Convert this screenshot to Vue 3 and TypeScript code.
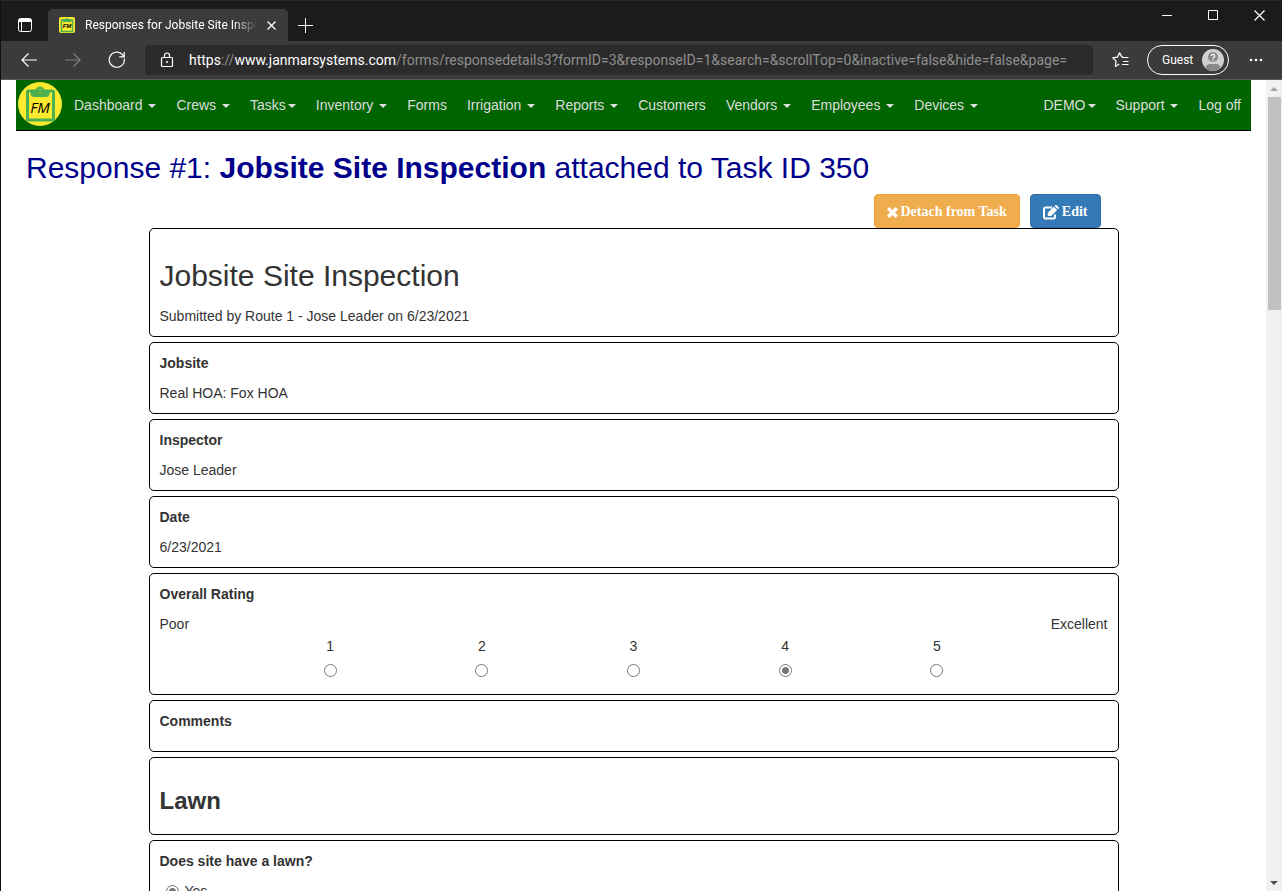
<script setup lang="ts">
import { ref } from 'vue'

interface NavItem {
  label: string
  caret?: 'spaced' | 'tight'
}

const mainNav: NavItem[] = [
  { label: 'Dashboard', caret: 'spaced' },
  { label: 'Crews', caret: 'spaced' },
  { label: 'Tasks', caret: 'tight' },
  { label: 'Inventory', caret: 'spaced' },
  { label: 'Forms' },
  { label: 'Irrigation', caret: 'spaced' },
  { label: 'Reports', caret: 'spaced' },
  { label: 'Customers' },
  { label: 'Vendors', caret: 'spaced' },
  { label: 'Employees', caret: 'spaced' },
  { label: 'Devices', caret: 'spaced' },
]

const userNav: NavItem[] = [
  { label: 'DEMO', caret: 'tight' },
  { label: 'Support', caret: 'spaced' },
  { label: 'Log off' },
]

const answers = [
  { question: 'Jobsite', answer: 'Real HOA: Fox HOA' },
  { question: 'Inspector', answer: 'Jose Leader' },
  { question: 'Date', answer: '6/23/2021' },
]

const ratings = [1, 2, 3, 4, 5]
const rating = ref(4)
const hasLawn = ref('Yes')
</script>

<template>
  <div class="window">
    <header class="tabstrip">
      <button class="icon-btn tab-menu" aria-label="Tab actions">
        <svg width="16" height="16" viewBox="0 0 16 16" fill="none" stroke="#fff">
          <rect x="1.5" y="1.5" width="13" height="13" rx="2" />
          <path d="M2 2.5h12v2H2z" fill="#fff" />
          <path d="M4.5 5v9" />
        </svg>
      </button>
      <div class="tab">
        <svg class="favicon" width="16" height="16" viewBox="0 0 16 16">
          <rect width="16" height="16" rx="2" fill="#fdea2e" />
          <rect x="2.5" y="3" width="11" height="11.5" fill="none" stroke="#4caf50" stroke-width="1.500" />
          <path d="M4 2h2.500q1.500-2 3 0H12v3H4z" fill="#4caf50" />
          <text x="8" y="11" text-anchor="middle" class="favicon-text">FM</text>
        </svg>
        <span class="tab-title">Responses for Jobsite Site Inspection</span>
        <button class="icon-btn tab-close" aria-label="Close tab">
          <svg width="9" height="9" viewBox="0 0 9 9" stroke="#fff" stroke-width="1.300">
            <path d="M.5.5l8 8M8.500.5l-8 8" />
          </svg>
        </button>
      </div>
      <button class="icon-btn new-tab" aria-label="New tab">
        <svg width="15" height="15" viewBox="0 0 15 15" stroke="#fff"><path d="M0 7.500h15M7.500 0v15" /></svg>
      </button>
      <div class="win-controls">
        <button class="icon-btn" aria-label="Minimize">
          <svg width="10" height="11" viewBox="0 0 10 11" stroke="#fff"><path d="M0 5.500h10" /></svg>
        </button>
        <button class="icon-btn" aria-label="Maximize">
          <svg width="10" height="11" viewBox="0 0 10 11" fill="none" stroke="#fff"><path d="M.5.5h9v9h-9z" /></svg>
        </button>
        <button class="icon-btn" aria-label="Close">
          <svg width="11" height="11" viewBox="0 0 11 11" stroke="#fff" stroke-width="1.200"><path d="M.5.5l10 10M10.500.5l-10 10" /></svg>
        </button>
      </div>
    </header>

    <div class="toolbar">
      <div class="history">
        <button class="icon-btn" aria-label="Back">
          <svg width="16" height="14" viewBox="0 0 16 14" fill="none" stroke="#fff" stroke-width="1.200"><path d="M16 7H1M7.500.5L1 7l6.500 6.500" /></svg>
        </button>
        <button class="icon-btn" aria-label="Forward">
          <svg width="16" height="14" viewBox="0 0 16 14" fill="none" stroke="#808080" stroke-width="1.200"><path d="M0 7h15M8.500.5L15 7l-6.500 6.500" /></svg>
        </button>
        <button class="icon-btn" aria-label="Refresh">
          <svg width="18" height="18" viewBox="0 0 18 18" fill="none" stroke="#fff" stroke-width="1.200"><path d="M16.300 7.500A7.600 7.600 0 1 1 14 3.200L16 5.500M16.200 1v4.800h-5" /></svg>
        </button>
      </div>
      <div class="address">
        <svg width="14" height="16" viewBox="0 0 14 16" fill="none" stroke="#fff" stroke-width="1.200">
          <rect x="1.500" y="5.500" width="11" height="9" rx="1" />
          <path d="M4.500 5.500V3.500a2.500 2.500 0 0 1 5 0v2" />
          <circle cx="7" cy="10" r="1" fill="#fff" stroke="none" />
        </svg>
        <div class="url" role="textbox" aria-label="Address" tabindex="0"><span class="hot">https</span>://<span class="hot">www.janmarsystems.com</span>/forms/responsedetails3?formID=3&amp;responseID=1&amp;search=&amp;scrollTop=0&amp;inactive=false&amp;hide=false&amp;page=</div>
      </div>
      <button class="icon-btn favorites" aria-label="Favorites">
        <svg width="17" height="16" viewBox="0 0 17 16" fill="none" stroke="#fff" stroke-width="1.200" stroke-linejoin="round">
          <path d="M11 4.800L9.700 4.600 7.600.8 5.400 5.200.8 5.900l3.300 3.300-.8 5.200 4-2.300M10 5.500h6.500M11 9.500h5.500M10 12.500h6.500" />
        </svg>
      </button>
      <button class="profile">
        <span>Guest</span>
        <svg width="22" height="22" viewBox="0 0 22 22">
          <circle cx="11" cy="11" r="11" fill="#d2d0ce" />
          <path d="M3.500 19q1-4 4-4h7q3 0 4 4A11 11 0 0 1 3.500 19z" fill="#8a8886" />
          <circle cx="11" cy="8" r="5" fill="#8a8886" />
          <path d="M9.300 7a1.700 1.700 0 1 1 2.600 1.400q-.9.600-.9 1.200M11 10.600v1.200" fill="none" stroke="#fff" stroke-width="1.300" />
        </svg>
      </button>
      <button class="icon-btn more" aria-label="Settings and more">
        <svg width="14" height="4" viewBox="0 0 14 4" fill="#fff"><circle cx="2" cy="2" r="1.300" /><circle cx="7" cy="2" r="1.300" /><circle cx="12" cy="2" r="1.300" /></svg>
      </button>
    </div>

    <div class="viewport">
      <div class="page">
        <nav class="navbar">
          <a class="brand" href="#" aria-label="Home">
            <svg width="48" height="50" viewBox="0 0 48 50">
              <circle cx="24" cy="24" r="22" fill="#fdea2e" />
              <rect x="11.500" y="11" width="26" height="29" rx="1" fill="none" stroke="#4caf50" stroke-width="3" />
              <path fill="#4caf50" fill-rule="evenodd" d="M14.500 10h5q.8-3.500 4.500-3.500t4.500 3.500h5v3.500q0 3.500-3.500 3.500H18q-3.500 0-3.500-3.500zM24 8.900a2 2 0 1 0 .1 0z" />
              <text x="24" y="33" text-anchor="middle" class="brand-text">FM</text>
            </svg>
          </a>
          <ul class="menu">
            <li v-for="item in mainNav" :key="item.label">
              <a href="#">{{ item.label }}<template v-if="item.caret === 'spaced'">&nbsp;</template><span v-if="item.caret" class="caret"></span></a>
            </li>
          </ul>
          <ul class="menu user-menu">
            <li v-for="item in userNav" :key="item.label">
              <a href="#">{{ item.label }}<template v-if="item.caret === 'spaced'">&nbsp;</template><span v-if="item.caret" class="caret"></span></a>
            </li>
          </ul>
        </nav>

        <h1>Response #1: <strong>Jobsite Site Inspection</strong> attached to Task ID 350</h1>

        <main class="response">
          <div class="actions">
            <button class="btn warning">
              <svg width="11" height="11" viewBox="0 0 11 11" stroke="#fff" stroke-width="3.400"><path d="M1.200 1.200l8.600 8.600M9.800 1.200L1.200 9.800" /></svg>
              Detach from Task
            </button>
            <button class="btn primary">
              <svg width="16" height="15" viewBox="0 0 16 15">
                <path d="M9 2.500H2.800Q1 2.500 1 4.300v7.400q0 1.800 1.800 1.800h7.400q1.800 0 1.800-1.800V9.500" fill="none" stroke="#fff" stroke-width="2" />
                <path d="M4.800 11V7.700l6-6 3.300 3.300L8.200 11zM11.500 1l.7-.7q.8-.6 1.500 0l1.900 1.900q.6.700 0 1.400l-.8.700z" fill="#fff" />
              </svg>
              Edit
            </button>
          </div>

          <section class="card title-card">
            <h2>Jobsite Site Inspection</h2>
            <p>Submitted by Route 1 - Jose Leader on 6/23/2021</p>
          </section>

          <section v-for="item in answers" :key="item.question" class="card">
            <p class="question">{{ item.question }}</p>
            <p>{{ item.answer }}</p>
          </section>

          <section class="card" role="radiogroup" aria-labelledby="rating-label">
            <p id="rating-label" class="question">Overall Rating</p>
            <div class="scale-ends"><span>Poor</span><span>Excellent</span></div>
            <div class="scale">
              <label v-for="n in ratings" :key="n">
                <span>{{ n }}</span>
                <input v-model="rating" type="radio" name="rating" :value="n" />
              </label>
            </div>
          </section>

          <section class="card">
            <p class="question">Comments</p>
            <p></p>
          </section>

          <section class="card section-card">
            <h3>Lawn</h3>
          </section>

          <section class="card" role="radiogroup" aria-labelledby="lawn-label">
            <p id="lawn-label" class="question">Does site have a lawn?</p>
            <label class="choice"><input v-model="hasLawn" type="radio" name="lawn" value="Yes" />Yes</label>
          </section>
        </main>
      </div>

      <div class="scrollbar" aria-hidden="true">
        <span class="arrow"><svg width="8" height="4" viewBox="0 0 8 4"><path d="M4 0l4 4H0z" fill="#a3a3a3" /></svg></span>
        <span class="track"><span class="thumb"></span></span>
        <span class="arrow"><svg width="8" height="4" viewBox="0 0 8 4"><path d="M0 0h8L4 4z" fill="#505050" /></svg></span>
      </div>
    </div>
  </div>
</template>

<style>
html,
body {
  margin: 0;
  overflow: hidden;
}
</style>

<style scoped>
* {
  box-sizing: border-box;
}

.window {
  display: flex;
  flex-direction: column;
  height: 100vh;
  border-left: 1px solid #101010;
  background: #fff;
  color: #333;
  font: 14px/20px "Liberation Sans", Arial, sans-serif;
}

svg {
  display: block;
  flex: none;
}

button {
  font: inherit;
  cursor: pointer;
}

.icon-btn {
  display: flex;
  align-items: center;
  justify-content: center;
  padding: 0;
  border: 0;
  background: none;
}

/* Browser chrome */
.tabstrip {
  display: flex;
  flex: none;
  height: 41px;
  border-top: 1px solid #2a2a2a;
  background: #1b1b1b;
}

.tab-menu {
  width: 47px;
  padding-top: 8px;
}

.tab {
  display: flex;
  align-items: center;
  width: 240px;
  margin-top: 8px;
  padding: 0 11px;
  border-radius: 5px 5px 0 0;
  background: #3b3b3b;
}

.favicon-text {
  font: italic bold 6px "Liberation Sans", sans-serif;
}

.tab-title {
  flex: 1;
  min-width: 0;
  margin: 0 8px 0 10px;
  overflow: hidden;
  color: #fff;
  font: 12px/20px Roboto, sans-serif;
  white-space: nowrap;
  mask-image: linear-gradient(to left, transparent, #000 24px);
}

.tab-close {
  width: 12px;
  height: 20px;
}

.new-tab {
  width: 35px;
  padding-top: 8px;
}

.win-controls {
  display: flex;
  height: 29px;
  margin-left: auto;
}

.win-controls button {
  width: 46px;
}

.toolbar {
  display: flex;
  flex: none;
  align-items: center;
  height: 39px;
  border-bottom: 1px solid #5a5a5a;
  background: #3b3b3b;
}

.history {
  display: flex;
  width: 144px;
  padding-left: 6px;
}

.history button {
  width: 44px;
  height: 30px;
}

.address {
  display: flex;
  flex: 1;
  align-items: center;
  min-width: 0;
  height: 30px;
  padding: 0 15px;
  border-radius: 4px;
  background: #2b2b2b;
}

.url {
  margin-left: 15px;
  overflow: hidden;
  color: #8f8f8f;
  font: 14px/22px Roboto, sans-serif;
  white-space: nowrap;
}

.hot {
  color: #fff;
}

.favorites {
  width: 54px;
  height: 30px;
}

.profile {
  display: flex;
  align-items: center;
  justify-content: space-between;
  width: 82px;
  height: 30px;
  padding: 0 4px 0 14px;
  border: 1px solid #fff;
  border-radius: 15px;
  background: none;
  color: #fff;
  font: 12px/20px Roboto, sans-serif;
}

.more {
  width: 53px;
  height: 30px;
}

/* Page */
.viewport {
  display: flex;
  flex: 1;
  min-height: 0;
}

.page {
  flex: 1;
  min-width: 0;
  padding: 0 15px;
  overflow: hidden;
}

.navbar {
  display: flex;
  height: 51px;
  border-bottom: 1px solid #000;
  background: #006400;
}

.brand-text {
  font: italic 15px "Open Sans", sans-serif;
}

.menu {
  display: flex;
  margin: 0;
  padding: 0;
  list-style: none;
}

.user-menu {
  margin-left: auto;
}

.menu a {
  display: block;
  padding: 15px 10px;
  color: #ddd;
  text-decoration: none;
  white-space: nowrap;
}

.caret {
  display: inline-block;
  margin-left: 2px;
  border-top: 4px solid;
  border-right: 4px solid transparent;
  border-left: 4px solid transparent;
  vertical-align: middle;
}

h1 {
  margin: 20px 10px 10px;
  color: #00008b;
  font-size: 30px;
  font-weight: 400;
  line-height: 33px;
}

h1 strong {
  font-weight: 700;
}

.response {
  display: flex;
  flex-direction: column;
  gap: 5px;
  max-width: 970px;
  margin: 0 auto;
}

.actions {
  display: flex;
  justify-content: flex-end;
  gap: 10px;
  margin-bottom: -5px;
  padding-right: 18px;
}

.btn {
  display: flex;
  align-items: center;
  gap: 3px;
  height: 34px;
  padding: 2px 12px 0;
  border: 1px solid;
  border-radius: 4px;
  color: #fff;
  font: bold 14px/20px "Liberation Serif", "Times New Roman", serif;
}

.warning {
  border-color: #eea236;
  background: #f0ad4e;
}

.primary {
  border-color: #2e6da4;
  background: #337ab7;
}

.card {
  padding: 10px;
  border: 1px solid #000;
  border-radius: 5px;
}

.card p {
  margin: 0;
}

.card .question {
  margin-bottom: 10px;
  font-weight: 700;
}

h2 {
  margin: 20px 0 14px;
  font-size: 30px;
  font-weight: 400;
  line-height: 33px;
}

h3 {
  margin: 20px 0 10px;
  font-size: 24px;
  font-weight: 700;
  line-height: 26px;
}

.scale-ends {
  display: flex;
  justify-content: space-between;
}

.scale {
  display: flex;
  padding: 2px 10% 7px;
}

.scale label {
  display: flex;
  flex: 1;
  flex-direction: column;
  align-items: center;
  gap: 8px;
}

input[type="radio"] {
  width: 13px;
  height: 13px;
  margin: 0;
  border: 1px solid #767676;
  border-radius: 50%;
  appearance: none;
  background: #fff;
}

input[type="radio"]:checked {
  background: radial-gradient(circle, #767676 3px, #fff 4px);
}

.choice {
  display: flex;
  align-items: center;
  gap: 6px;
  padding-left: 6px;
}

.scrollbar {
  display: flex;
  flex: none;
  flex-direction: column;
  width: 16px;
  background: #f1f1f1;
}

.arrow {
  display: flex;
  align-items: center;
  justify-content: center;
  height: 17px;
}

.track {
  flex: 1;
  padding: 0 1px 0 2px;
}

.thumb {
  display: block;
  height: 27.4%;
  background: #c1c1c1;
}
</style>
